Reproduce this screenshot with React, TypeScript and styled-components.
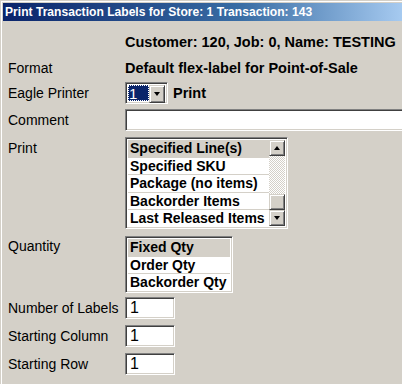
import React from "react";
import styled, { createGlobalStyle } from "styled-components";

const GlobalStyle = createGlobalStyle`
  html, body {
    margin: 0;
    padding: 0;
    background: #d4d0c8;
  }
  body {
    font-family: "Liberation Sans", Arial, sans-serif;
    color: #000;
  }
`;

const printOptions = [
  "Specified Line(s)",
  "Specified SKU",
  "Package (no items)",
  "Backorder Items",
  "Last Released Items",
];

const quantityOptions = ["Fixed Qty", "Order Qty", "Backorder Qty"];

const Window = styled.div`
  width: 402px;
  height: 384px;
  box-sizing: border-box;
  overflow: hidden;
  display: flex;
  flex-direction: column;
  background: #d4d0c8;
  border-top: 1px solid #d4d0c8;
  border-left: 1px solid #d4d0c8;
  box-shadow: inset 1px 1px #ffffff;
  padding: 2px 0 0 2px;
`;

const TitleBar = styled.div`
  height: 18px;
  display: flex;
  align-items: center;
  padding-left: 2px;
  background: linear-gradient(to right, #0a246a 0%, #3a6ea5 60%, #a6caf0 100%);
  color: #fff;
  font-family: "Liberation Sans", Arial, sans-serif;
  font-weight: bold;
  font-size: 12.1px;
  white-space: nowrap;
`;

const Body = styled.div`
  display: flex;
  flex-direction: column;
  padding: 11px 0 0 5px;
`;

const Row = styled.div<{ $mt: number; $h: number; $top?: boolean }>`
  display: flex;
  align-items: ${(p) => (p.$top ? "flex-start" : "center")};
  margin-top: ${(p) => p.$mt}px;
  height: ${(p) => p.$h}px;
`;

const Label = styled.div<{ $offset?: number }>`
  width: 117px;
  flex: none;
  font-size: 14px;
  padding-top: ${(p) => p.$offset || 0}px;
  white-space: nowrap;
`;

const Field = styled.div`
  display: flex;
  align-items: center;
  gap: 5px;
  white-space: nowrap;
`;

const BoldText = styled.span`
  font-weight: bold;
  font-size: 14.5px;
`;

const sunken = `
  box-sizing: border-box;
  border-top: 1px solid #808080;
  border-left: 1px solid #808080;
  border-bottom: 1px solid #ffffff;
  border-right: 1px solid #ffffff;
  box-shadow: inset 1px 1px #404040, inset -1px -1px #d4d0c8;
`;

const raised = `
  box-sizing: border-box;
  background: #d4d0c8;
  border-top: 1px solid #d4d0c8;
  border-left: 1px solid #d4d0c8;
  border-bottom: 1px solid #404040;
  border-right: 1px solid #404040;
  box-shadow: inset 1px 1px #ffffff, inset -1px -1px #808080;
`;

const Combo = styled.div`
  ${sunken};
  width: 43px;
  height: 22px;
  display: flex;
  padding: 2px;
  background: #fff;
`;

const ComboValue = styled.div`
  flex: 1;
  background: #0a246a;
  color: #fff;
  font-size: 15px;
  outline: 1px dotted #fff;
  outline-offset: -1px;
  display: flex;
  align-items: center;
  padding-left: 1px;
  line-height: 1;
`;

const ArrowButton = styled.div<{ $h?: number }>`
  ${raised};
  width: 16px;
  height: ${(p) => p.$h || 16}px;
  flex: none;
  display: flex;
  align-items: center;
  justify-content: center;
`;

const Caret = styled.span<{ $up?: boolean }>`
  width: 0;
  height: 0;
  border-left: 3.5px solid transparent;
  border-right: 3.5px solid transparent;
  ${(p) =>
    p.$up
      ? "border-bottom: 4px solid #000;"
      : "border-top: 4px solid #000;"}
`;

const TextInput = styled.div<{ $w: number }>`
  ${sunken};
  width: ${(p) => p.$w}px;
  height: 22px;
  background: #fff;
  font-size: 16px;
  display: flex;
  align-items: center;
  padding-left: 4px;
  flex: none;
`;

const ListBox = styled.div<{ $w: number; $h: number }>`
  ${sunken};
  width: ${(p) => p.$w}px;
  height: ${(p) => p.$h}px;
  padding: 2px;
  background: #fff;
  display: flex;
  overflow: hidden;
`;

const Items = styled.div`
  flex: 1;
  overflow: hidden;
`;

const Item = styled.div<{ $selected?: boolean }>`
  height: 17.6px;
  box-sizing: border-box;
  border-bottom: 1px solid #d4d0c8;
  background: ${(p) => (p.$selected ? "#d4d0c8" : "#fff")};
  font-weight: bold;
  font-size: 14px;
  line-height: 16.6px;
  padding-left: 2px;
  white-space: nowrap;

  &:last-child {
    border-bottom: none;
  }
`;

const ScrollBar = styled.div`
  width: 16px;
  flex: none;
  display: flex;
  flex-direction: column;
`;

const Track = styled.div`
  flex: 1;
  background-color: #fff;
  background-image: repeating-conic-gradient(#d4d0c8 0 25%, #fff 0 50%);
  background-size: 2px 2px;
`;

const Thumb = styled.div`
  ${raised};
  height: 16px;
  flex: none;
`;

export default function App() {
  return (
    <>
      <GlobalStyle />
      <Window>
        <TitleBar>Print Transaction Labels for Store: 1 Transaction: 143</TitleBar>
        <Body>
          <Row $mt={0} $h={20}>
            <Label />
            <Field>
              <BoldText>Customer: 120, Job: 0, Name: TESTING</BoldText>
            </Field>
          </Row>
          <Row $mt={6} $h={20}>
            <Label>Format</Label>
            <Field>
              <BoldText>Default flex-label for Point-of-Sale</BoldText>
            </Field>
          </Row>
          <Row $mt={4} $h={22}>
            <Label>Eagle Printer</Label>
            <Field>
              <Combo>
                <ComboValue>1</ComboValue>
                <ArrowButton $h={18}>
                  <Caret />
                </ArrowButton>
              </Combo>
              <BoldText>Print</BoldText>
            </Field>
          </Row>
          <Row $mt={5} $h={22}>
            <Label>Comment</Label>
            <TextInput $w={290} />
          </Row>
          <Row $mt={6} $h={92} $top>
            <Label $offset={3}>Print</Label>
            <ListBox $w={163} $h={92}>
              <Items>
                {printOptions.map((o, i) => (
                  <Item key={o} $selected={i === 0}>
                    {o}
                  </Item>
                ))}
              </Items>
              <ScrollBar>
                <ArrowButton>
                  <Caret $up />
                </ArrowButton>
                <Track />
                <Thumb />
                <ArrowButton>
                  <Caret />
                </ArrowButton>
              </ScrollBar>
            </ListBox>
          </Row>
          <Row $mt={7} $h={56} $top>
            <Label $offset={2}>Quantity</Label>
            <ListBox $w={108} $h={57}>
              <Items>
                {quantityOptions.map((o, i) => (
                  <Item key={o} $selected={i === 0}>
                    {o}
                  </Item>
                ))}
              </Items>
            </ListBox>
          </Row>
          <Row $mt={5} $h={22}>
            <Label>Number of Labels</Label>
            <TextInput $w={50}>1</TextInput>
          </Row>
          <Row $mt={6} $h={22}>
            <Label>Starting Column</Label>
            <TextInput $w={50}>1</TextInput>
          </Row>
          <Row $mt={6} $h={22}>
            <Label>Starting Row</Label>
            <TextInput $w={50}>1</TextInput>
          </Row>
        </Body>
      </Window>
    </>
  );
}
